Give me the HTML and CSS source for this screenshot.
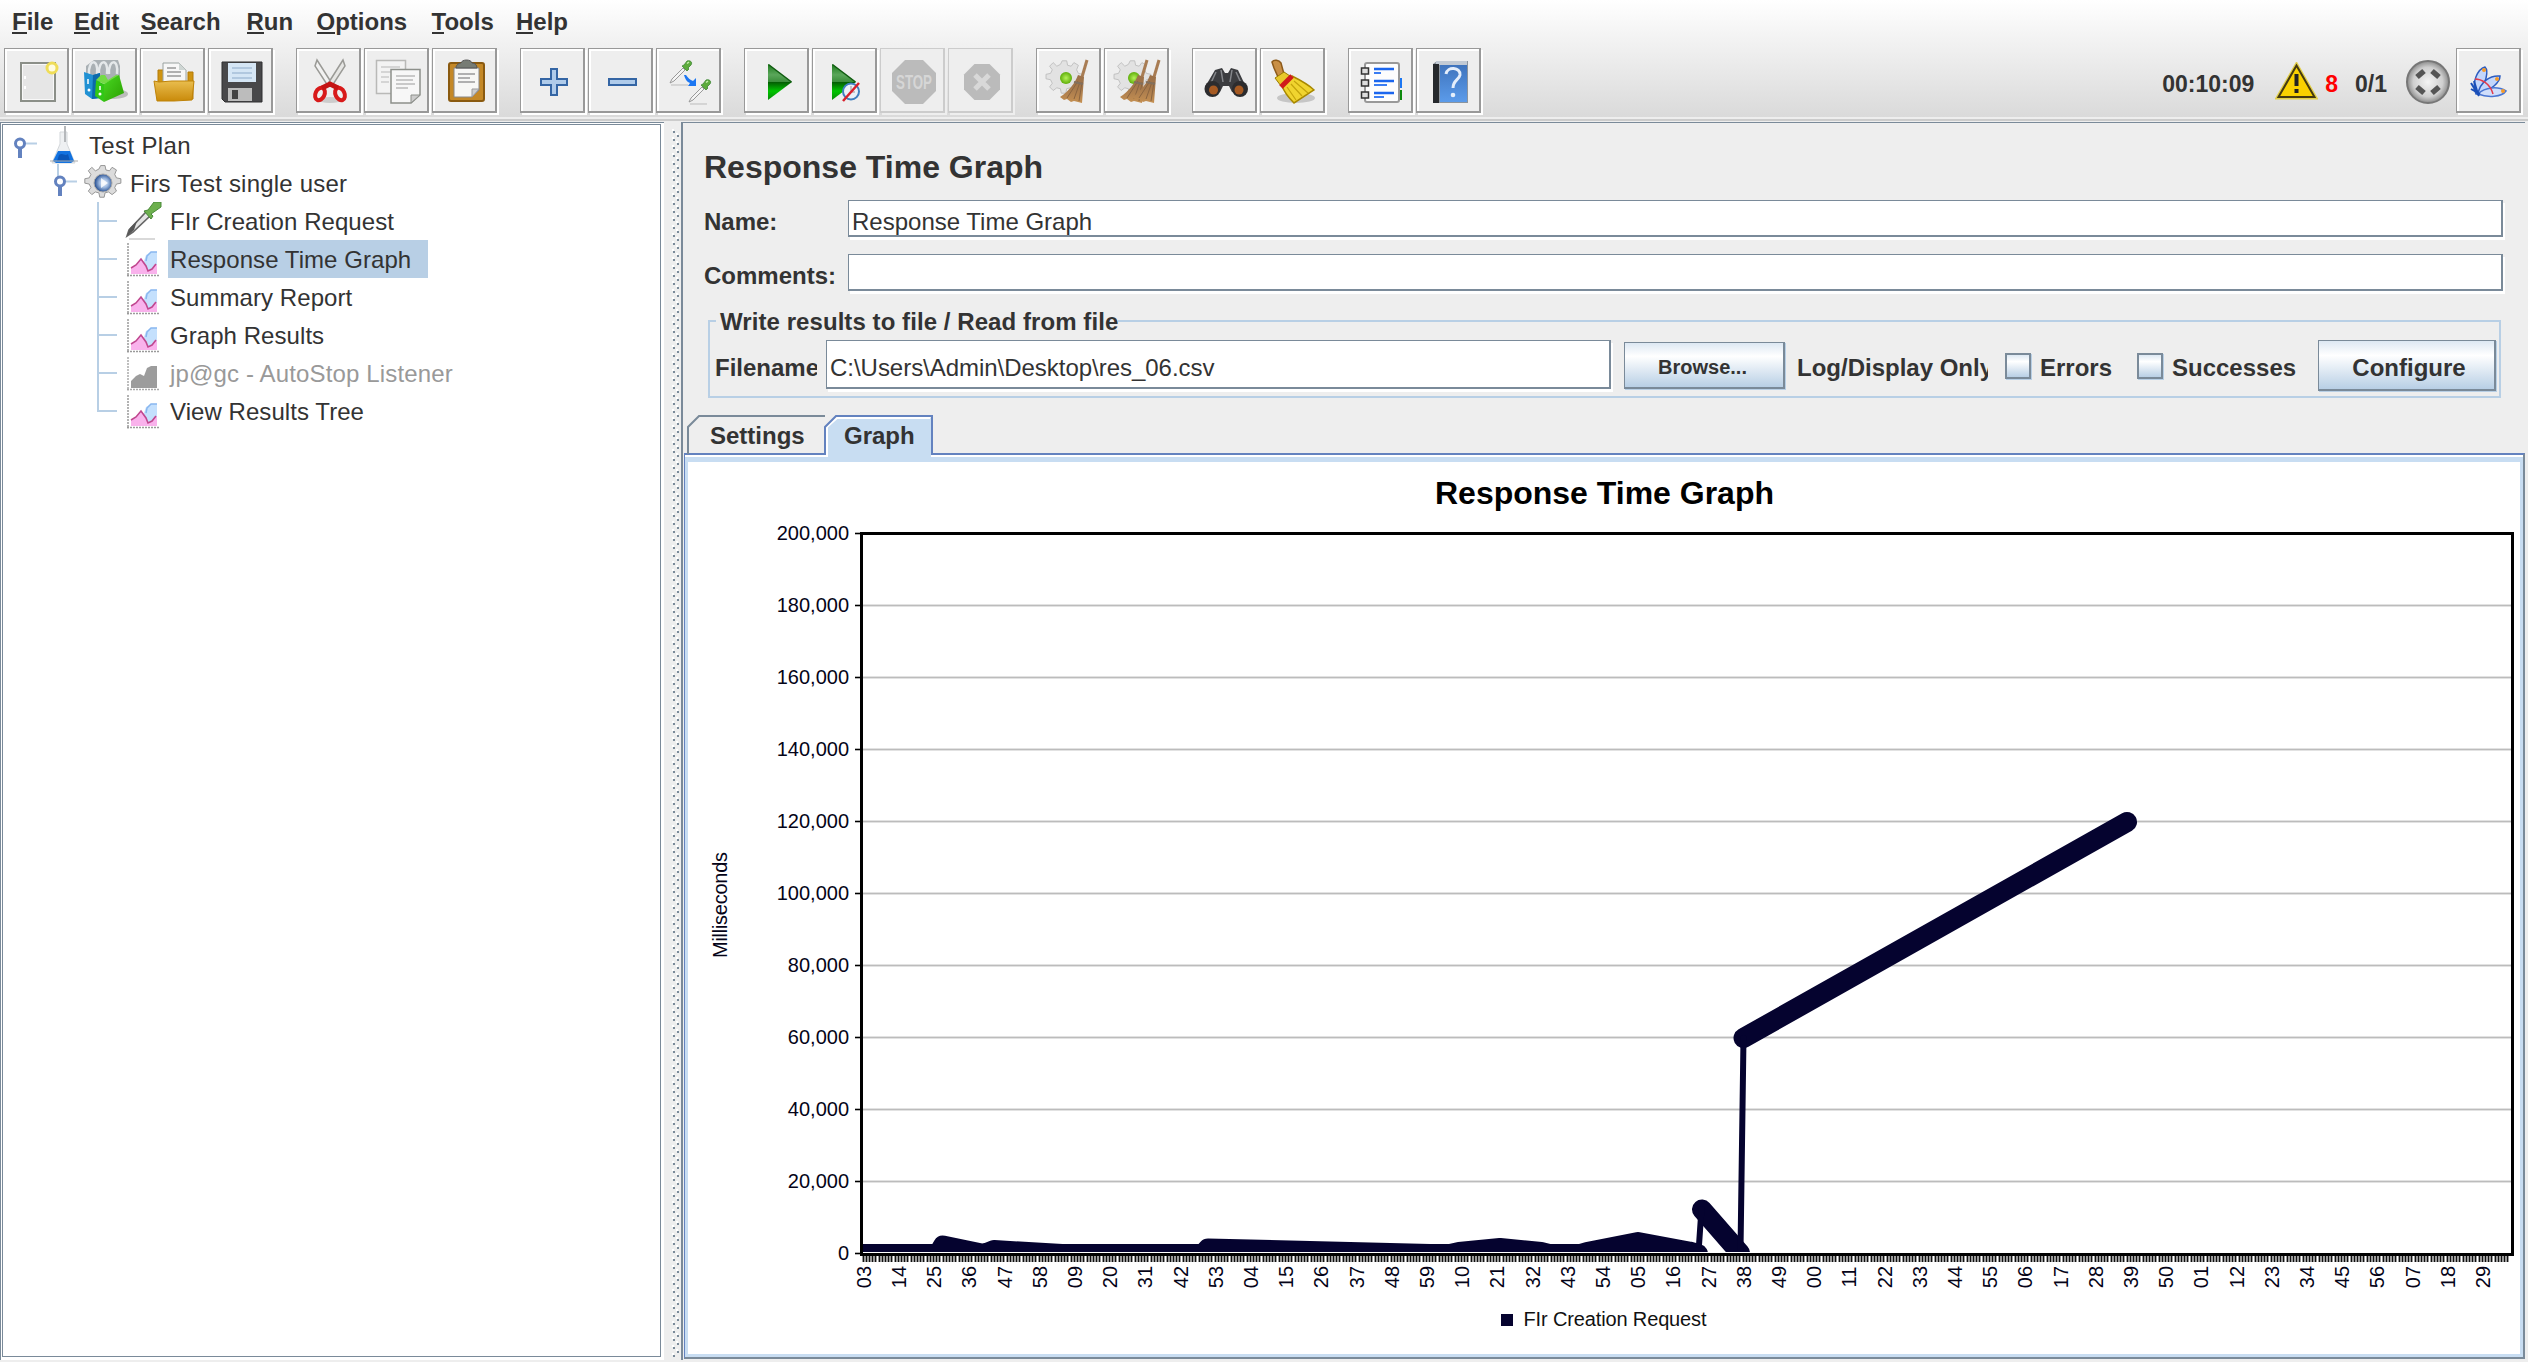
FILE: index.html
```html
<!DOCTYPE html>
<html lang="en">
<head>
<meta charset="utf-8">
<title>Response Time Graph</title>
<link rel="stylesheet" href="styles.css">
</head>
<body>
<svg class="defs" width="0" height="0" aria-hidden="true">
  <defs>
    <linearGradient id="gPlay" x1="0" y1="0" x2="0" y2="1"><stop offset="0" stop-color="#1c7a1c"/><stop offset=".3" stop-color="#5aa65a"/><stop offset=".49" stop-color="#3c8f3c"/><stop offset=".5" stop-color="#045a04"/><stop offset=".75" stop-color="#00c400"/><stop offset="1" stop-color="#078a07"/></linearGradient>
    <linearGradient id="gFolder" x1="0" y1="0" x2="0" y2="1"><stop offset="0" stop-color="#e9bd4e"/><stop offset="1" stop-color="#c98a0a"/></linearGradient>
    <linearGradient id="gBlue" x1="0" y1="0" x2="0" y2="1"><stop offset="0" stop-color="#3f74bd"/><stop offset="1" stop-color="#5b9bea"/></linearGradient>
    <linearGradient id="gGreen" x1="0" y1="0" x2="1" y2="1"><stop offset="0" stop-color="#49d822"/><stop offset="1" stop-color="#2a9f00"/></linearGradient>
    <linearGradient id="gBroom" x1="0" y1="0" x2="0" y2="1"><stop offset="0" stop-color="#9b7049"/><stop offset=".5" stop-color="#a87a4c"/><stop offset="1" stop-color="#c59052"/></linearGradient>
    <radialGradient id="gBall"><stop offset="0" stop-color="#b6f25a"/><stop offset="1" stop-color="#5fae0a"/></radialGradient>
    <radialGradient id="gKnob"><stop offset="0" stop-color="#f4f4f4"/><stop offset=".7" stop-color="#cfcfcf"/><stop offset="1" stop-color="#8b8b8b"/></radialGradient>
    <radialGradient id="gHub" cx=".55" cy=".5"><stop offset="0" stop-color="#e8f1ff"/><stop offset=".5" stop-color="#9db8de"/><stop offset="1" stop-color="#2d5596"/></radialGradient>
    <g id="dropper">
      <path d="M2 25h17" stroke="#bbb" stroke-width="1"/>
      <path d="M1 23 3 19 14 8l2 2L5 21z" fill="#f4f4f4" stroke="#999" stroke-width="1"/>
      <path d="M13 6l5 5 2-2-1-1 3-3c2-3-1-5-4-4l-3 4z" fill="#5cab3c" stroke="#3f8736" stroke-width=".8"/>
      <path d="M18 3.500l2-1.500" stroke="#c6efae" stroke-width="1.500"/>
    </g>
    <path id="cog" d="M28 12h5l1 5 4 1 3-4 5 3-2 5 2 4 5 1v5l-5 1-2 4 2 4-5 4-4-3-4 1-1 5h-5l-1-5-4-1-4 3-4-4 3-4-2-4-5-1v-5l5-1 2-4-3-4 4-4 4 4 4-2z"/>
    <g id="whisk">
      <path d="M51 12 46 29" stroke="#a87c53" stroke-width="3"/>
      <path d="M42 27l6 2-2 26-8-2-3 1-4-3-3 1-4-3c9-6 15-14 18-22z" fill="url(#gBroom)"/>
      <path d="M42 33 31 50M44 34l-6 17M46 34l-3 19" stroke="#8a6440" stroke-width="1" fill="none"/>
      <path d="M38 34l9 2" stroke="#82705e" stroke-width="2"/>
    </g>
    <g id="chartIcon">
      <path d="M2 1v33.500M1 33.500h33" stroke="#9a9a9a" stroke-width="1.500" stroke-dasharray="2 1"/>
      <path d="M17 31V22l3-9 5-3h6v21z" fill="#c4e0fd"/>
      <path d="M20 19l1-5 4-4h6" fill="none" stroke="#88b6ef" stroke-width="1.500"/>
      <path d="M5 32v-6l5-3 5-6 4 5 3 7 4-2 3-5 2 1v9z" fill="#f9b2ec"/>
      <path d="M5 26l5-3 5-6 5 7 2 5 4-2 4-5" fill="none" stroke="#c0478f" stroke-width="1.600"/>
    </g>
  </defs>
</svg>

<header class="top">
  <nav class="menu">
    <span><u>F</u>ile</span><span><u>E</u>dit</span><span><u>S</u>earch</span><span><u>R</u>un</span><span><u>O</u>ptions</span><span><u>T</u>ools</span><span><u>H</u>elp</span>
  </nav>
  <div class="toolbar">
    <div class="group">
      <button class="tool" title="New"><svg viewBox="0 0 65 65"><rect x="17" y="15" width="34" height="38" fill="#f8f8f8" stroke="#8b8f88" stroke-width="2"/><rect x="19" y="17" width="30" height="34" fill="#e6e6e6"/><path d="M21 28v3M21 38v3" stroke="#fff" stroke-width="2"/><circle cx="48" cy="20" r="5" fill="#fffce0" stroke="#efdd58" stroke-width="3"/></svg></button>
      <button class="tool" title="Templates"><svg viewBox="0 0 65 65"><ellipse cx="42" cy="46" rx="14" ry="5" fill="#bbb"/><path d="M14 18l8-6h24l2 6v14H14z" fill="#a9b0b4"/><path d="M17 26c-1-15 10-16 8 0M27 26c-1-15 10-16 8 0M37 26c-1-15 10-16 8 0" fill="none" stroke="#e4e8ea" stroke-width="2.500"/><path d="M12 24l9 3 7-2v25l-8 1-7-5z" fill="#2191d3"/><path d="M21 27l7-2v25l-8 1z" fill="#0c69ab"/><path d="M24 32l8 4v18l-9-6z" fill="#31c716"/><path d="M24 32l5-5 4 0 3 5 8-5 4 1-16 8z" fill="#73db45"/><path d="M32 36l15-9 5 18-20 9z" fill="url(#gGreen)"/><path d="M16 31v5M28 38v4" stroke="#fff" stroke-width="1.500"/><circle cx="17" cy="42" r="1.500" fill="#fff"/><circle cx="28" cy="46" r="1.500" fill="#fff"/></svg></button>
      <button class="tool" title="Open"><svg viewBox="0 0 65 65"><path d="M18 22h6v14h24V24h5v27H18z" fill="#cf9412" stroke="#b47a06"/><path d="M23 15h16l7 7v14H23z" fill="#f7f7f7" stroke="#9aa2a0"/><path d="M39 15v7h7z" fill="#cfd6d4"/><path d="M27 20h9M27 24h14M27 28h14" stroke="#999" stroke-width="1.500"/><path d="M14 33l5 1 13-1h22l-2 19-18 1H17z" fill="url(#gFolder)" stroke="#bf8308"/></svg></button>
      <button class="tool" title="Save"><svg viewBox="0 0 65 65"><path d="M14 14h40v40H17l-3-3z" fill="#48484a" stroke="#2e2e30"/><rect x="20" y="15" width="28" height="19" fill="#d5e6f5"/><path d="M24 20h20M24 25h20M24 30h20" stroke="#a5bfd8" stroke-width="1.500"/><rect x="20" y="40" width="24" height="13" fill="#bcbcbc"/><rect x="24" y="42" width="6" height="9" fill="#444"/></svg></button>
    </div>
    <div class="group">
      <button class="tool" title="Cut"><svg viewBox="0 0 65 65"><ellipse cx="34" cy="52" rx="12" ry="3" fill="#ccc"/><path d="M21 12l14 22-3 4-13-20z" fill="#f2f2f2" stroke="#9a9a96" stroke-width="1.500"/><path d="M47 12L33 34l3 4 13-20z" fill="#e6e6e4" stroke="#9a9a96" stroke-width="1.500"/><ellipse cx="24" cy="46" rx="4.500" ry="6.500" transform="rotate(25 24 46)" fill="none" stroke="#d81a1a" stroke-width="4"/><ellipse cx="44" cy="46" rx="4.500" ry="6.500" transform="rotate(-25 44 46)" fill="none" stroke="#d81a1a" stroke-width="4"/><path d="M26 40l8-4 8 4" fill="none" stroke="#c41414" stroke-width="5"/></svg></button>
      <button class="tool" title="Copy"><svg viewBox="0 0 65 65"><path d="M12.500 12.500h29v33h-29z" fill="#f3f3f3" stroke="#b9b9b7" stroke-width="1.500"/><path d="M17 19h19M17 24h19M17 29h8M17 34h8" stroke="#ccc" stroke-width="1.500"/><path d="M27 21.500h29V47l-9 8H27z" fill="#f7f7f7" stroke="#8d908b" stroke-width="1.500"/><path d="M56 47h-9v8z" fill="#ccc" stroke="#8d908b"/><path d="M32 28h19M32 32h17M32 36h19M32 40h12" stroke="#bbb" stroke-width="1.500"/></svg></button>
      <button class="tool" title="Paste"><svg viewBox="0 0 65 65"><rect x="17" y="15" width="35" height="38" rx="2" fill="#c48827" stroke="#8a5a10" stroke-width="2"/><path d="M22 20h25v22l-7 7H22z" fill="#f7f7f5" stroke="#888"/><path d="M47 41h-7v8z" fill="#ccc" stroke="#999"/><path d="M26 26h17M26 30h12M26 34h17" stroke="#999" stroke-width="1.500"/><path d="M24 20c0-4 4-5 5-5 1-4 10-4 11 0 3 0 5 2 5 5z" fill="#777c74" stroke="#555"/></svg></button>
    </div>
    <div class="group">
      <button class="tool" title="Expand All"><svg viewBox="0 0 65 65"><path d="M31 21h6v10h10v6H37v10h-6V37H21v-6h10z" fill="#afcbea" stroke="#3465a4" stroke-width="2"/></svg></button>
      <button class="tool" title="Collapse All"><svg viewBox="0 0 65 65"><rect x="21" y="31" width="27" height="6" fill="#afcbea" stroke="#3465a4" stroke-width="2"/></svg></button>
      <button class="tool" title="Toggle"><svg viewBox="0 0 65 65"><use href="#dropper" x="13" y="12"/><use href="#dropper" x="32" y="31"/><path d="M28 27c1 4 3 7 6 8l-2 3 8 0v-8l-3 3c-3-1-5-3-7-6z" fill="#1b76f2"/></svg></button>
    </div>
    <div class="group">
      <button class="tool" title="Start"><svg viewBox="0 0 65 65"><path d="M24 16l24 18-24 18z" fill="url(#gPlay)"/><path d="M24.500 16.500L47.500 34" stroke="#115c11" stroke-width="1.500"/></svg></button>
      <button class="tool" title="Start no pauses"><svg viewBox="0 0 65 65"><path d="M20 16l24 18-24 18z" fill="url(#gPlay)"/><path d="M20.500 16.500L43.500 34" stroke="#115c11" stroke-width="1.500"/><circle cx="39" cy="43.500" r="8" fill="#eaf1f8" stroke="#3f7fbf" stroke-width="2"/><path d="M39 38v6h4" fill="none" stroke="#999" stroke-width="1"/><path d="M31 53l16-18" stroke="#d8202c" stroke-width="2.500"/></svg></button>
      <button class="tool off" title="Stop"><svg viewBox="0 0 65 65"><path d="M25 12h18l13 13v18L43 56H25L12 43V25z" fill="#bbb"/><text x="34" y="41" class="stop" textLength="36" lengthAdjust="spacingAndGlyphs">STOP</text></svg></button>
      <button class="tool off" title="Shutdown"><svg viewBox="0 0 65 65"><path d="M26.500 16h15L52 26.500v15L41.500 52h-15L16 41.500v-15z" fill="#bbb"/><path d="M27 27l14 14M41 27L27 41" stroke="#d8d8d8" stroke-width="5"/></svg></button>
    </div>
    <div class="group">
      <button class="tool" title="Clear"><svg viewBox="0 0 65 65"><g transform="translate(1 2) scale(.9)"><use href="#cog" fill="#e2e2e2" stroke="#bdbdbd"/></g><circle cx="30" cy="30" r="6" fill="url(#gBall)"/><use href="#whisk"/></svg></button>
      <button class="tool" title="Clear All"><svg viewBox="0 0 65 65"><g transform="translate(1 2) scale(.9)"><use href="#cog" fill="#e2e2e2" stroke="#bdbdbd"/></g><circle cx="30" cy="30" r="6" fill="url(#gBall)"/><use href="#whisk" x="-8"/><use href="#whisk" x="4"/></svg></button>
    </div>
    <div class="group">
      <button class="tool" title="Search"><svg viewBox="0 0 65 65"><path d="M23 22l7-2 3 5h3l3-5 7 2 8 17-5 6-9-1-3-6h-6l-3 6-9 1-6-6z" fill="#3c3d40"/><path d="M24 24l-6 13M44 24l6 13M29 22l2 12M40 22l-2 12" stroke="#85878b" stroke-width="1.500"/><circle cx="20.500" cy="41" r="8" fill="#2c2c2e"/><circle cx="48" cy="41" r="8" fill="#2c2c2e"/><circle cx="21.500" cy="42" r="4.500" fill="#a65a22"/><circle cx="47" cy="42" r="4.500" fill="#a65a22"/></svg></button>
      <button class="tool" title="Reset Search"><svg viewBox="0 0 65 65"><ellipse cx="36" cy="50" rx="19" ry="5" fill="#c6c6c6"/><path d="M12 14c2-3 7-2 9 1l3 11-6 3-4-9z" fill="#c98f45" stroke="#8d5a1a" stroke-width="1.500"/><path d="M15 30l9-6 6 4-9 10z" fill="#e8c92b" stroke="#9b7b00"/><path d="M22 38l10-10c8 4 17 9 22 14L34 55c-4-4-9-9-12-17z" fill="#f0d42f" stroke="#a88800" stroke-width="1.500"/><path d="M27 39l9 13M31 36l11 12M34 33l14 12" stroke="#c4a40c" stroke-width="1.200"/><path d="M21 39L32 28" stroke="#d01c1c" stroke-width="5"/></svg></button>
    </div>
    <div class="group">
      <button class="tool" title="Function Helper"><svg viewBox="0 0 65 65"><rect x="49" y="30" width="5" height="10" fill="#1b76f2"/><rect x="49" y="42" width="5" height="10" fill="#0d8a0d"/><rect x="17" y="15" width="34" height="39" rx="2" fill="#fdfdfd" stroke="#999" stroke-width="2"/><g fill="#ddd" stroke="#333" stroke-width="1.500"><rect x="13.500" y="20" width="7" height="6"/><rect x="13.500" y="32" width="7" height="6"/><rect x="13.500" y="44" width="7" height="6"/></g><path d="M26 21h20M26 33h20M26 45h20" stroke="#1b66ee" stroke-width="2.500"/><path d="M26 25h7M26 37h13M26 49h10" stroke="#3b7df2" stroke-width="2"/></svg></button>
      <button class="tool" title="Help"><svg viewBox="0 0 65 65"><path d="M17 16l4-3h31v42H17z" fill="#8b949e"/><path d="M20 13h31v4H20z" fill="#c2cad4"/><path d="M24 17h27v37H24z" fill="url(#gBlue)"/><path d="M17 16h6v39h-6z" fill="#25282c"/><path d="M30 26c1-8 15-7 14 1-1 5-7 5-7 13" fill="none" stroke="#e4eefb" stroke-width="3"/><circle cx="37" cy="47" r="2.300" fill="#e4eefb"/></svg></button>
    </div>
    <div class="status">
      <span class="clock">00:10:09</span>
      <svg class="warn" width="43" height="38" viewBox="0 0 43 38"><path d="M21.500 2L41 36H2z" fill="#f9d100" stroke="#e2cf4a" stroke-width="3"/><path d="M21.500 3.500L39.500 35h-36z" fill="#f9d100" stroke="#453a10" stroke-width="2"/><path d="M21.500 12v12M21.500 27v4" stroke="#222" stroke-width="4"/></svg>
      <span class="errors">8</span>
      <span class="threads">0/1</span>
      <svg class="knob" width="46" height="46" viewBox="0 0 46 46"><circle cx="23" cy="23" r="21" fill="url(#gKnob)" stroke="#777" stroke-width="2"/><path d="M12 18l7-6M27 12l7 6M12 28l7 6M27 34l7-6" stroke="#555" stroke-width="5.500"/></svg>
      <button class="tool" title="JMeter"><svg viewBox="0 0 65 65"><path d="M20 46c-5-12 2-25 9-27 4 4 1 17-7 27z" fill="#c3d6fb" stroke="#2c5cc0" stroke-width="1.500"/><path d="M22 46c2-12 12-19 22-18 0 6-8 14-22 18z" fill="#c3d6fb" stroke="#2c5cc0" stroke-width="1.500"/><path d="M22 46c7-7 20-8 28-3-4 6-18 7-28 3z" fill="#d0defb" stroke="#4a76d2" stroke-width="1.500"/><path d="M19 31c6 0 15 4 18 15" fill="none" stroke="#e23a4a" stroke-width="1.500"/><path d="M15 35l8 13M15 41l9 5M18 33l4 13" stroke="#1a4fb8" stroke-width="2"/><circle cx="28" cy="22" r="2" fill="#f49a2a"/><circle cx="41" cy="31" r="2" fill="#f49a2a"/><circle cx="47" cy="43" r="2" fill="#f49a2a"/></svg></button>
    </div>
  </div>
</header>
<div class="rule"></div>

<main class="split">
  <section class="treePane"><div class="tree">
    <div class="node lvl0"><svg class="handle" viewBox="0 0 28 38"><path d="M14 17.500h13" stroke="#b8cfe5" stroke-width="2"/><path d="M10 20v12" stroke="#6382bf" stroke-width="4"/><circle cx="10" cy="17.500" r="4.500" fill="#fff" stroke="#6382bf" stroke-width="3"/></svg><svg class="ico" viewBox="0 0 38 38"><path d="M14 6h7v12l8 19H6l8-19z" fill="#eef0f2" stroke="#d3d7da"/><path d="M19 0v16" stroke="#b5b8bb" stroke-width="2"/><path d="M12 25h12l4 10-3 2H10l-3-2z" fill="#1272e0"/><path d="M13 29c4-3 6 2 9-1l2 7H11z" fill="#0a56b8"/><path d="M4 35h28" stroke="#aaa" stroke-width="1"/></svg><span>Test Plan</span></div>
    <div class="node lvl1"><svg class="handle" viewBox="0 0 28 38"><path d="M8 0v14" stroke="#b8cfe5" stroke-width="2"/><path d="M14 17.500h13" stroke="#b8cfe5" stroke-width="2"/><path d="M10 20v12" stroke="#6382bf" stroke-width="4"/><circle cx="10" cy="17.500" r="4.500" fill="#fff" stroke="#6382bf" stroke-width="3"/></svg><svg class="ico" viewBox="0 0 38 38"><g transform="translate(-8 -9) scale(.88)"><use href="#cog" fill="#dcdcdc" stroke="#8c8c8c"/></g><circle cx="19" cy="19" r="9" fill="url(#gHub)" stroke="#aaa"/><path d="M17 14l7 5-7 5z" fill="#fff" opacity=".8"/></svg><span>Firs Test single user</span></div>
    <div class="node lvl2"><svg class="ico" viewBox="0 0 38 38"><path d="M5 37h26" stroke="#ccc" stroke-width="1.500"/><path d="M3 34l2-6L22 10l4 4-17 16z" fill="#e4e4e4" stroke="#666" stroke-width="1.600"/><path d="M3 34l3-8 7-7-3 9z" fill="#555"/><path d="M20 9l7 8 2-3-2-2 10-7V0h-7l-6 8z" fill="#6db04e" stroke="#4b8a3a"/></svg><span>FIr Creation Request</span></div>
    <div class="node lvl2 selected"><svg class="ico" viewBox="0 0 38 38"><use href="#chartIcon" x="2" y="2"/></svg><span>Response Time Graph</span></div>
    <div class="node lvl2"><svg class="ico" viewBox="0 0 38 38"><use href="#chartIcon" x="2" y="2"/></svg><span>Summary Report</span></div>
    <div class="node lvl2"><svg class="ico" viewBox="0 0 38 38"><use href="#chartIcon" x="2" y="2"/></svg><span>Graph Results</span></div>
    <div class="node lvl2 disabled"><svg class="ico" viewBox="0 0 38 38"><path d="M4 3v33.500M3 35.500h33" stroke="#aaa" stroke-width="1.500" stroke-dasharray="2 1"/><path d="M7 34v-7l5-5 4-2 4 2 3-8 4-2h6v22z" fill="#9c9c9c"/></svg><span>jp@gc - AutoStop Listener</span></div>
    <div class="node lvl2 last"><svg class="ico" viewBox="0 0 38 38"><use href="#chartIcon" x="2" y="2"/></svg><span>View Results Tree</span></div>
  </div></section>
  <div class="divider"><svg width="8" height="1228"><defs><pattern id="bumps" width="8" height="8" patternUnits="userSpaceOnUse"><path d="M0 0h2v2H0zM4 4h2v2H4z" fill="#fff"/><path d="M1 2h2v2H1zM5 6h2v2H5z" fill="#7a8a99"/></pattern></defs><rect width="8" height="1228" fill="url(#bumps)"/></svg></div>
  <section class="panel">
    <h1>Response Time Graph</h1>
    <div class="row"><label>Name:</label><div class="field">Response Time Graph</div></div>
    <div class="row"><label>Comments:</label><div class="field"></div></div>
    <fieldset class="file">
      <legend>Write results to file / Read from file</legend>
      <div class="fileRow">
        <label class="fn">Filename</label>
        <div class="field path">C:\Users\Admin\Desktop\res_06.csv</div>
        <div class="btn browse">Browse...</div>
        <label class="log">Log/Display Only:</label>
        <i class="check"></i><label class="err">Errors</label>
        <i class="check"></i><label class="suc">Successes</label>
        <div class="btn configure">Configure</div>
      </div>
    </fieldset>
    <div class="tabs">
      <div class="tab settings"><svg viewBox="0 0 138 40"><path d="M1 39V12L12 1h126" fill="none" stroke="#7a8a99" stroke-width="2"/></svg><span>Settings</span></div>
      <div class="tab graph"><svg viewBox="0 0 110 42"><path d="M3 42V13L13 3h94v39z" fill="#c8ddf2"/><path d="M3 42V12L13 3h93" fill="none" stroke="#fff" stroke-width="2"/><path d="M1 39V12L12 1h96v38" fill="none" stroke="#6382bf" stroke-width="2"/></svg><span>Graph</span></div>
    </div>
    <div class="tabBody">
      <svg class="chart" viewBox="688 462 1832 892">
        <defs><clipPath id="plot"><rect x="863" y="535" width="1648" height="717"/></clipPath></defs>
        <text class="chartTitle" x="1604.500" y="504" textLength="339">Response Time Graph</text>
        <g id="yaxis"></g>
        <rect x="861.500" y="533.500" width="1651" height="721" fill="none" stroke="#000" stroke-width="3"/>
        <g clip-path="url(#plot)" fill="none" stroke="#05032f" stroke-width="20" stroke-linecap="round" stroke-linejoin="round">
          <path d="M855 1254H938L943 1245.500 984 1254 994 1250 1062 1254H1203L1208 1248.500 1430 1254H1450L1459 1252 1500 1248 1541 1252 1549 1254H1580L1587 1252 1638 1242 1689 1251.500 1698 1254"/>
          <path d="M1702 1209.500L1740 1253" />
          <path d="M1743.500 1038L2127 822"/>
          <path d="M1699 1245L1701.500 1209M1740.500 1250L1743.500 1038" stroke-width="6"/>
        </g>
        <path d="M943 1246H1640V1252H943z" fill="#05032f"/>
        <g id="xaxis"></g>
        <text class="tickText" transform="translate(726.500 958) rotate(-90)" textLength="106">Milliseconds</text>
        <rect x="1501" y="1314" width="12" height="12" fill="#05032f"/>
        <text class="tickText legend" x="1523.500" y="1326" textLength="183">FIr Creation Request</text>
      </svg>
    </div>
  </section>
</main>
<script src="chart.js"></script>
</body>
</html>
```
FILE: styles.css
```css
* { box-sizing: border-box; }
body { margin: 0; width: 2528px; height: 1362px; overflow: hidden; display: flex; flex-direction: column; background: #eee; color: #333; font: 24px "Liberation Sans", Arial, sans-serif; }
.defs { position: absolute; }
svg { display: block; flex: none; }

.top { height: 117px; background: linear-gradient(#fff, #dadada); }
.menu { display: grid; grid-template-columns: 62px 66.5px 106px 70px 115px 84.5px auto; height: 48px; padding-left: 12px; font-weight: bold; line-height: 44px; }
.menu u { text-decoration: none; background: linear-gradient(#333, #333) 0 24px / 100% 2px no-repeat; }
.toolbar { display: flex; gap: 23px; padding-left: 4px; }
.group { display: flex; gap: 3px; }
.tool { width: 65px; height: 65px; padding: 0; border: 1px solid #999; border-width: 1px 2px 2px 1px; background: #eee; box-shadow: inset 2px 2px 0 #fff, 2px 2px 0 #fff; flex: none; }
.tool svg { width: 65px; height: 65px; margin: -1px; }
.tool.off { border-color: #ccc; box-shadow: 2px 2px 0 #eee; }
.stop { font-size: 20px; font-weight: bold; fill: #d6d6d6; text-anchor: middle; }
.status { display: flex; align-items: center; margin-left: auto; padding-right: 7px; height: 65px; font-weight: bold; font-size: 23px; }
.status span { padding-top: 7px; }
.clock { margin-right: 21px; }
.warn { margin-right: 7px; }
.errors { color: #f00; margin-right: 17px; }
.threads { margin-right: 18px; }
.knob { margin: 2px 5px 0 0; }
.rule { height: 5px; border-top: 2px solid #eee; border-bottom: 1px solid #eee; background: #ccc; }

.split { display: flex; flex: 1; align-items: flex-start; }
.treePane { width: 664px; height: 1238px; border: solid #7a8a99; border-width: 1px 0 0 1px; padding: 1px 3px 3px 1px; background: #fff; }
.tree { height: 1233px; border: 1px solid #7a8a99; padding-top: 1px; }
.node { display: flex; height: 38px; line-height: 40px; white-space: nowrap; }
.node span { height: 38px; padding: 0 2px; }
.handle { width: 28px; height: 38px; }
.ico { width: 38px; height: 38px; }
.lvl0 { padding-left: 7px; }
.lvl0 .ico { margin: 0 3px 0 8px; }
.lvl0 span { letter-spacing: .35px; }
.lvl1 { padding-left: 47px; }
.lvl1 .ico { margin: 0 6px 0 6px; }
.lvl1 span { letter-spacing: .2px; }
.lvl2 { margin-left: 94px; background: linear-gradient(#b8cfe5, #b8cfe5) 0 0 / 2px 100% no-repeat, linear-gradient(#b8cfe5, #b8cfe5) 0 18px / 20px 2px no-repeat; }
.lvl2.last { background-size: 2px 20px, 20px 2px; }
.lvl2 .ico { margin: 0 6px 0 27px; }
.lvl2 span { letter-spacing: .06px; }
.selected span { width: 260px; background: #b8cfe5; }
.lvl2.disabled span { color: #999; letter-spacing: .15px; }
.divider { width: 17px; padding: 7px 0 0 8px; }

.panel { width: 1844px; height: 1238px; border: solid #7a8a99; border-width: 1px 0 0 2px; padding-top: 24px; display: flex; flex-direction: column; }
h1 { margin: 0 0 13px; padding-left: 21px; font-size: 32px; line-height: 40px; }
.row { display: flex; height: 37px; margin-bottom: 17px; padding-left: 21px; }
label { font-weight: bold; white-space: nowrap; overflow: hidden; }
.row label { width: 144px; height: 44px; line-height: 43px; }
.field { width: 1655px; height: 37px; padding-left: 3px; border: solid #7a8a99; border-width: 1px 2px 2px 1px; background: #fff; box-shadow: 2px 3px 0 #fff; line-height: 41px; white-space: nowrap; }
.file { position: relative; margin: 12px 0 0 25px; width: 1793px; height: 78px; padding: 18px 0 0 5px; border: 2px solid #b8cfe5; min-width: 0; }
legend { position: absolute; top: -18px; left: 6px; padding: 0 0 0 4px; line-height: 36px; background: #eee; font-weight: bold; letter-spacing: .07px; }
.fileRow { display: flex; height: 51px; }
.fileRow label { line-height: 55px; height: 55px; }
.fn { width: 102px; margin-right: 9px; }
.path { width: 785px; height: 49px; line-height: 54px; margin-right: 13px; letter-spacing: -.03px; }
.btn { border: solid #7a8a99; border-width: 1px 2px 2px 1px; box-shadow: 1px 1px 0 #b8cfe5; background: linear-gradient(#dde8f3, #fff 30%, #b8cfe5); font-weight: bold; text-align: center; }
.browse { width: 161px; height: 47px; margin: 2px 12px 0 0; font-size: 20px; line-height: 48px; padding-right: 3px; }
.log { width: 191px; margin-right: 17px; }
.check { width: 26px; height: 26px; margin-top: 13px; border: 2px solid #7a8a99; box-shadow: 1px 1px 0 #b8cfe5; background: linear-gradient(#dde8f3, #fff 30%, #b8cfe5); }
.err { width: 96px; margin: 0 1px 0 9px; }
.suc { width: 146px; margin-left: 9px; }
.configure { width: 178px; height: 51px; line-height: 54px; padding-left: 5px; }

.tabs { display: flex; height: 38px; margin: 17px 0 0 4px; }
.tab { position: relative; height: 42px; font-weight: bold; line-height: 42px; }
.tab svg { position: absolute; left: 0; top: 0; }
.tab span { position: relative; }
.settings { width: 138px; padding-left: 23px; }
.settings svg { width: 138px; height: 40px; }
.graph { z-index: 1; width: 110px; padding-left: 20px; margin-left: -1px; }
.graph svg { width: 110px; height: 42px; }
.tabBody { width: 1841px; height: 906px; margin-left: 1px; border: 1px solid #6382bf; border-width: 2px 2px 2px 1px; border-right-color: #7a8a99; border-bottom-color: #7a8a99; background: #c8ddf2; box-shadow: inset 0 2px 0 #fff; padding: 7px 0 0 3px; }
.chart { width: 1832px; height: 892px; background: #fff; }
.chartTitle { font-size: 32px; font-weight: bold; fill: #000; text-anchor: middle; }
.tickText { font-size: 20px; fill: #050418; }
.yLabel { text-anchor: end; }
.xLabel { text-anchor: middle; }
.legend { fill: #111; }
```
FILE: chart.js
```js
const NS = "http://www.w3.org/2000/svg";
function add(parent, name, attrs, text) {
  const el = document.createElementNS(NS, name);
  for (const key in attrs) el.setAttribute(key, attrs[key]);
  if (text) el.textContent = text;
  parent.appendChild(el);
}
const yaxis = document.getElementById("yaxis");
for (let i = 0; i <= 10; i++) {
  const y = 533.5 + 72 * i;
  if (i > 0 && i < 10) {
    add(yaxis, "path", { d: `M863 ${y}H2511`, stroke: "#e2e2e2", "stroke-width": 3 });
    add(yaxis, "path", { d: `M863 ${y}H2511`, stroke: "#bcbcbc", "stroke-width": 1 });
  }
  add(yaxis, "path", { d: `M855 ${y}H861`, stroke: "#000", "stroke-width": 1.6 });
  add(yaxis, "text", { class: "tickText yLabel", x: 849, y: y + 6.5 }, ((10 - i) * 20000).toLocaleString("en-US"));
}
const xaxis = document.getElementById("xaxis");
for (let i = 0; i < 515; i++) {
  const x = 862 + Math.floor(i * 3.2);
  add(xaxis, "rect", { x, y: 1256, width: 3, height: 6, fill: "#999" });
  add(xaxis, "rect", { x: x + 1, y: 1256, width: 1, height: 6, fill: "#111" });
}
for (let i = 0; i < 47; i++) {
  const label = String((3 + 11 * i) % 60).padStart(2, "0");
  add(xaxis, "text", { class: "tickText xLabel", transform: `translate(${870.8 + 35.2 * i} 1277) rotate(-90)` }, label);
}
```
